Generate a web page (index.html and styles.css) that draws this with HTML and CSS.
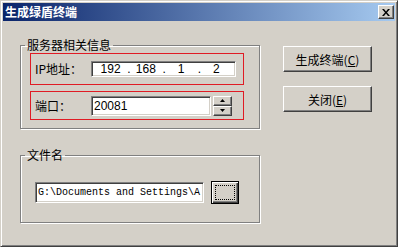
FILE: index.html
```html
<!DOCTYPE html>
<html lang="zh-CN">
<head>
    <meta charset="UTF-8">
    <title>生成绿盾终端</title>
    <link rel="stylesheet" href="styles.css">
</head>
<body>
    <div class="window">
        <div class="titlebar">
            <span class="title">生成绿盾终端</span>
            <button class="close" type="button">
                <svg width="8" height="7" viewBox="0 0 8 7"><path d="M0 0h2l2 2.5 2-2.5h2l-3 3.5 3 3.5h-2l-2-2.5-2 2.5h-2l3-3.5z" fill="#000"/></svg>
            </button>
        </div>

        <div class="content">
            <div class="left">
                <fieldset class="group">
                    <legend>服务器相关信息</legend>
                    <div class="field-row ip-row">
                        <label class="label">IP地址：</label>
                        <div class="ip-box">
                            <span class="seg">192</span><span class="dot">.</span>
                            <span class="seg">168</span><span class="dot">.</span>
                            <span class="seg">1</span><span class="dot">.</span>
                            <span class="seg">2</span>
                        </div>
                    </div>
                    <div class="field-row port-row">
                        <label class="label">端口：</label>
                        <div class="port-box">20081</div>
                        <div class="spinner">
                            <span class="spin-btn"><svg width="5" height="3" viewBox="0 0 5 3"><path d="M2.5 0L5 3H0z" fill="#000"/></svg></span>
                            <span class="spin-btn"><svg width="5" height="3" viewBox="0 0 5 3"><path d="M0 0h5L2.5 3z" fill="#000"/></svg></span>
                        </div>
                    </div>
                </fieldset>

                <fieldset class="group file-group">
                    <legend>文件名</legend>
                    <div class="file-row">
                        <div class="file-box">G:\Documents and Settings\A</div>
                        <button class="browse" type="button"><span class="focus"></span></button>
                    </div>
                </fieldset>
            </div>

            <div class="actions">
                <button class="btn" type="button">生成终端(<u>C</u>)</button>
                <button class="btn" type="button">关闭(<u>E</u>)</button>
            </div>
        </div>
    </div>
</body>
</html>
```

FILE: styles.css
```css
body {
    margin: 0;
    background: #fff;
    font-family: "Liberation Sans", "Noto Sans CJK SC", sans-serif;
    font-size: 12px;
    color: #000;
}
.window {
    width: 398px;
    height: 247px;
    box-sizing: border-box;
    background: #d4d0c8;
    border: 1px solid;
    border-color: #d4d0c8 #404040 #404040 #d4d0c8;
    box-shadow: inset 1px 1px #fff, inset -1px -1px #808080;
    padding: 2px;
}
.titlebar {
    height: 18px;
    display: flex;
    align-items: center;
    justify-content: space-between;
    padding-left: 2px;
    background: linear-gradient(to right, #0a246a, #a6caf0);
}
.title {
    color: #fff;
    font-family: "Noto Sans CJK SC", sans-serif;
    font-weight: bold;
    font-size: 12px;
    line-height: 14px;
}
.close {
    width: 16px;
    height: 14px;
    margin-right: 1px;
    padding: 0;
    display: flex;
    align-items: center;
    justify-content: center;
    background: #d4d0c8;
    border: 1px solid;
    border-color: #fff #404040 #404040 #fff;
    box-shadow: inset -1px -1px #808080;
}
.content {
    display: flex;
    padding: 17px 0 0 17px;
}
.left {
    width: 240px;
}
.group {
    margin: 0;
    padding: 0;
    min-width: 0;
    border: 1px solid #808080;
    box-shadow: 1px 1px 0 #fff, inset 1px 1px 0 #fff;
}
.group legend {
    margin-left: 4px;
    padding: 0 2px;
    line-height: 14px;
    font-family: "Noto Sans CJK SC", sans-serif;
}
.file-group {
    margin-top: 19px;
}
.field-row {
    display: flex;
    align-items: center;
    box-sizing: border-box;
    width: 214px;
    margin-left: 9px;
    padding-left: 4px;
    border: 1px solid #e01b24;
}
.ip-row {
    height: 32px;
    margin-top: 1px;
}
.port-row {
    height: 29px;
    margin-top: 6px;
    margin-bottom: 8px;
}
.label {
    width: 56px;
    font-family: "Noto Sans CJK SC", sans-serif;
    line-height: 14px;
}
.ip-box,
.port-box,
.file-box {
    box-sizing: border-box;
    background: #fff;
    border: 1px solid;
    border-color: #808080 #fff #fff #808080;
    box-shadow: inset 1px 1px #404040, inset -1px -1px #d4d0c8;
}
.ip-box {
    width: 145px;
    height: 16px;
    display: flex;
    align-items: center;
    padding: 0 2px;
    line-height: 12px;
}
.seg {
    flex: 1;
    text-align: center;
}
.dot {
    width: 2px;
    text-align: center;
}
.port-box {
    width: 120px;
    height: 20px;
    padding-left: 2px;
    line-height: 18px;
}
.spinner {
    display: flex;
    flex-direction: column;
    margin-left: 2px;
    width: 19px;
    height: 20px;
}
.spin-btn {
    flex: 1;
    display: flex;
    align-items: center;
    justify-content: center;
    box-sizing: border-box;
    border: 1px solid;
    border-color: #fff #404040 #404040 #fff;
    box-shadow: inset -1px -1px #808080;
}
.file-row {
    display: flex;
    align-items: center;
    margin: 19px 0 18px 14px;
}
.file-box {
    width: 169px;
    height: 21px;
    padding-left: 2px;
    overflow: hidden;
    white-space: nowrap;
    font-family: "Liberation Mono", monospace;
    font-size: 10px;
    line-height: 19px;
}
.browse {
    width: 28px;
    height: 23px;
    margin-left: 7px;
    padding: 3px;
    box-sizing: border-box;
    background: #d4d0c8;
    border: 1px solid #000;
    box-shadow: inset 1px 1px #fff, inset -1px -1px #404040, inset -2px -2px #808080;
    display: flex;
}
.focus {
    flex: 1;
    border: 1px dotted #000;
}
.actions {
    display: flex;
    flex-direction: column;
    gap: 14px;
    margin: 8px 0 0 23px;
}
.btn {
    width: 89px;
    height: 26px;
    padding: 0;
    background: #d4d0c8;
    border: 1px solid;
    border-color: #fff #404040 #404040 #fff;
    box-shadow: inset -1px -1px #808080;
    font-family: "Noto Sans CJK SC", sans-serif;
    font-size: 12px;
    color: #000;
}
```
